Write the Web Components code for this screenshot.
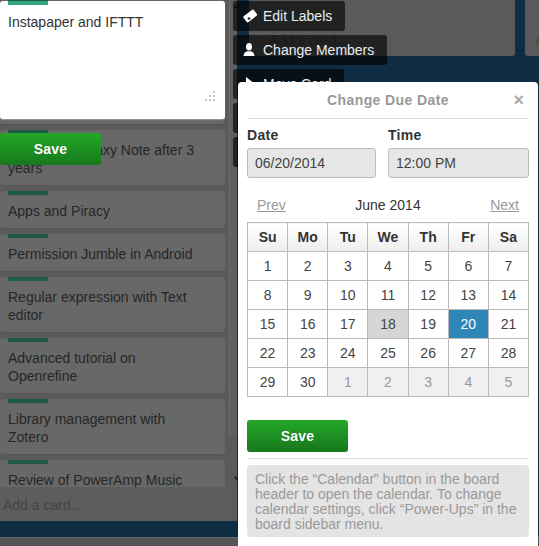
<!DOCTYPE html>
<html>
<head>
<meta charset="utf-8">
<title>Change Due Date</title>
<style>
    html, body { margin: 0; height: 100%; overflow: hidden; background: #0e2c42; }
    body { font: 14px/18px "Liberation Sans", Arial, sans-serif; }
</style>
</head>
<body>
<due-app>
    <board-view>
        <board-list slot="first" footer="Add a card…">
            <list-card style="height:124px"></list-card>
            <list-card>Review of Galaxy Note after 3 years</list-card>
            <list-card>Apps and Piracy</list-card>
            <list-card>Permission Jumble in Android</list-card>
            <list-card>Regular expression with Text editor</list-card>
            <list-card>Advanced tutorial on Openrefine</list-card>
            <list-card>Library management with Zotero</list-card>
            <list-card>Review of PowerAmp Music</list-card>
        </board-list>
    </board-view>
    <quick-editor>Instapaper and IFTTT</quick-editor>
    <quick-actions></quick-actions>
    <due-popover></due-popover>
</due-app>

<script>
class DueApp extends HTMLElement {
    constructor() {
        super();
        this.attachShadow({ mode: 'open' });
    }
    connectedCallback() {
        this.shadowRoot.innerHTML = `
            <style>
                :host { display: block; position: relative; width: 539px; height: 546px; overflow: hidden; }
            </style>
            <slot></slot>
        `;
    }
}
customElements.define('due-app', DueApp);

class BoardView extends HTMLElement {
    constructor() {
        super();
        this.attachShadow({ mode: 'open' });
    }
    connectedCallback() {
        this.shadowRoot.innerHTML = `
            <style>
                :host { display: flex; flex-direction: column; width: 539px; height: 546px; }
                .lists { display: flex; height: 537px; gap: 10px; }
                .wide { width: 266px; height: 56px; margin-left: 2px; background: #5a5a5a; border-radius: 0 0 3px 3px;
                        color: #484848; padding: 31px 0 0 20px; box-sizing: border-box; }
                .last { flex: 1; height: 56px; background: #5a5a5a; border-radius: 0 0 0 3px;
                        color: #484848; padding: 31px 0 0 10px; box-sizing: border-box; overflow: hidden; }
                .strip { height: 9px; background: #555; border-top: 1px solid #6a6a6a; box-sizing: border-box; }
            </style>
            <div class="lists">
                <slot name="first"></slot>
                <div class="wide">Add a card…</div>
                <div class="last">Add</div>
            </div>
            <div class="strip"></div>
        `;
    }
}
customElements.define('board-view', BoardView);

class BoardList extends HTMLElement {
    constructor() {
        super();
        this.attachShadow({ mode: 'open' });
    }
    connectedCallback() {
        this.shadowRoot.innerHTML = `
            <style>
                :host { display: flex; flex-direction: column; position: relative; width: 237px; height: 521px; background: #5a5a5a; }
                .body { display: flex; height: 487px; overflow: hidden; }
                .cards { width: 225px; flex: none; display: flex; flex-direction: column; gap: 6px; }
                .scroll { margin-left: 4px; width: 8px; height: 437px; background: #5f5f5f; border-left: 1px solid #6b6b6b; box-sizing: border-box; }
                .foot { height: 34px; background: #5d5d5d; color: #444; padding: 9px 3px 0; box-sizing: border-box; }
                /* scroll arrows lie over the bar */
                .arrow { position: absolute; left: 234px; fill: none; stroke: #222; stroke-width: 2; }
            </style>
            <div class="body">
                <div class="cards"><slot></slot></div>
                <div class="scroll"></div>
            </div>
            <div class="foot">${this.getAttribute('footer') || ''}</div>
            <svg class="arrow" style="top:3px" width="9" height="6" viewBox="0 0 9 6"><path d="M.7 5.300 4.500 1.500 8.300 5.300"/></svg>
            <svg class="arrow" style="top:476px" width="9" height="6" viewBox="0 0 9 6"><path d="M.7.700 4.500 4.500 8.300.700"/></svg>
        `;
    }
}
customElements.define('board-list', BoardList);

class ListCard extends HTMLElement {
    constructor() {
        super();
        this.attachShadow({ mode: 'open' });
    }
    connectedCallback() {
        this.shadowRoot.innerHTML = `
            <style>
                :host { display: block; flex: none; background: #686868; border-radius: 3px; color: #262626;
                        box-shadow: 0 1px 0 #555; padding: 0 26px 8px 8px; box-sizing: border-box; }
                .label { width: 40px; height: 4px; background: #1f5a45; margin-bottom: 7px; }
            </style>
            <div class="label"></div>
            <slot></slot>
        `;
    }
}
customElements.define('list-card', ListCard);

class QuickEditor extends HTMLElement {
    constructor() {
        super();
        this.attachShadow({ mode: 'open' });
    }
    connectedCallback() {
        this.shadowRoot.innerHTML = `
            <style>
                /* sits over the first card of the list */
                :host { display: block; position: absolute; left: 0; top: 1px; width: 225px; height: 165px; }
                .box { position: relative; height: 118px; background: #fff; border-radius: 3px; color: #333; padding: 0 8px;
                       box-sizing: border-box; box-shadow: 0 1px 1px #999; }
                .label { width: 40px; height: 4px; background: #34a67e; margin-bottom: 8px; }
                svg { position: absolute; right: 9px; bottom: 17px; }
                .save { display: block; width: 101px; height: 32px; margin-top: 14px; line-height: 32px; text-align: center; font-weight: bold;
                        letter-spacing: .2px; color: #fff; background: linear-gradient(#24a828, #17791c); border-radius: 3px; text-shadow: 0 0 1px rgba(0,0,0,.3); }
            </style>
            <div class="box">
                <div class="label"></div>
                <slot></slot>
                <svg width="12" height="12" viewBox="0 0 12 12" fill="#c8c8c8">
                    <rect x="9" y="1" width="2" height="2"/><rect x="5" y="5" width="2" height="2"/><rect x="9" y="5" width="2" height="2"/>
                    <rect x="1" y="9" width="2" height="2"/><rect x="5" y="9" width="2" height="2"/><rect x="9" y="9" width="2" height="2"/>
                </svg>
            </div>
            <div class="save">Save</div>
        `;
    }
}
customElements.define('quick-editor', QuickEditor);

class QuickActions extends HTMLElement {
    constructor() {
        super();
        this.attachShadow({ mode: 'open' });
    }
    connectedCallback() {
        const tag = `<svg width="14" height="14" viewBox="0 0 14 14"><rect x="1" y="3.500" width="13" height="7.500" rx="1.500" fill="#fff" transform="rotate(-38 7 7.500)"/><circle cx="6" cy="9.500" r="1.300" fill="#1b2a33"/></svg>`;
        const person = `<svg width="14" height="14" viewBox="0 0 14 14" fill="#fff"><ellipse cx="6" cy="3.800" rx="3" ry="3.800"/><path d="M.6 13c0-2.600 1.200-4 3.400-4.700h4c2.200.7 3.400 2.100 3.400 4.700z"/></svg>`;
        const move = `<svg width="14" height="14" viewBox="0 0 14 14" fill="#fff"><path d="M3 0l9 7-9 7z"/></svg>`;
        const row = (icon, text, width) => `<div class="act" style="width:${width}px">${icon}<span>${text}</span></div>`;
        this.shadowRoot.innerHTML = `
            <style>
                :host { display: flex; flex-direction: column; gap: 4px; position: absolute; left: 233px; top: 1px; }
                .act { display: flex; align-items: center; gap: 6px; height: 30px; box-sizing: border-box; padding-left: 10px;
                       background: rgba(0,0,0,.62); border-radius: 3px; color: #e6eef2; white-space: nowrap; }
                svg { flex: none; }
            </style>
            ${row(tag, 'Edit Labels', 112)}
            ${row(person, 'Change Members', 154)}
            ${row(move, 'Move Card', 111)}
            ${row('', '', 111)}
            ${row('', '', 111)}
        `;
    }
}
customElements.define('quick-actions', QuickActions);

class DueCalendar extends HTMLElement {
    constructor() {
        super();
        this.attachShadow({ mode: 'open' });
    }
    connectedCallback() {
        const days = ['Su', 'Mo', 'Tu', 'We', 'Th', 'Fr', 'Sa'];
        const cells = [];
        for (let d = 1; d <= 30; d++) cells.push(`<td class="${d === 18 ? 'today' : d === 20 ? 'sel' : ''}">${d}</td>`);
        for (let d = 1; d <= 5; d++) cells.push(`<td class="other">${d}</td>`);
        let rows = '';
        for (let i = 0; i < 35; i += 7) rows += `<tr>${cells.slice(i, i + 7).join('')}</tr>`;
        this.shadowRoot.innerHTML = `
            <style>
                :host { display: block; }
                .nav { display: flex; justify-content: space-between; padding: 0 10px; height: 18px; margin-bottom: 8px; color: #333; }
                .nav a { color: #999; text-decoration: underline; }
                table { border-collapse: collapse; width: 282px; table-layout: fixed; color: #444; }
                th, td { border: 1px solid #bbb; height: 28px; padding: 0; text-align: center; }
                th { font-weight: bold; background: linear-gradient(#fff, #eee); color: #333; }
                .today { background: #d6d6d6; }
                .sel { background: #2e86b9; color: #fff; }
                .other { background: #f0f0f0; color: #999; }
            </style>
            <div class="nav"><a>Prev</a><span>June 2014</span><a>Next</a></div>
            <table>
                <tr>${days.map(d => `<th>${d}</th>`).join('')}</tr>
                ${rows}
            </table>
        `;
    }
}
customElements.define('due-calendar', DueCalendar);

class DuePopover extends HTMLElement {
    constructor() {
        super();
        this.attachShadow({ mode: 'open' });
    }
    connectedCallback() {
        this.shadowRoot.innerHTML = `
            <style>
                :host { display: block; position: absolute; left: 238px; top: 82px; width: 300px; height: 470px; background: #fff;
                        border-radius: 4px; padding: 0 9px; box-sizing: border-box; color: #333; }
                .head { position: relative; height: 36px; line-height: 36px; text-align: center; font-weight: bold; color: #999;
                        letter-spacing: .4px; border-bottom: 1px solid #ddd; }
                .close { position: absolute; right: 5px; top: 0; font-size: 18px; color: #aaa; letter-spacing: 0; }
                .fields { display: grid; grid-template-columns: 129px 141px; gap: 12px; margin-top: 7px; margin-bottom: 18px; }
                label { display: block; font-weight: bold; height: 22px; line-height: 18px; letter-spacing: .3px; }
                .input { height: 30px; line-height: 28px; padding: 0 7px; background: #e6e6e6; border: 1px solid #bbb; border-radius: 3px; box-sizing: border-box; color: #444; }
                .save { width: 101px; height: 32px; line-height: 32px; margin-top: 23px; text-align: center; font-weight: bold; letter-spacing: .2px; color: #fff;
                        background: linear-gradient(#24a828, #17771c); border-radius: 3px; text-shadow: 0 0 1px rgba(0,0,0,.3); }
                hr { border: 0; height: 1px; background: #ddd; margin: 6px 0; }
                .note { height: 72px; background: #e4e4e4; border-radius: 4px; padding: 7px 8px; box-sizing: border-box; color: #999; line-height: 15px; }
            </style>
            <div class="head">Change Due Date<span class="close">×</span></div>
            <div class="fields">
                <div><label>Date</label><div class="input">06/20/2014</div></div>
                <div><label>Time</label><div class="input">12:00 PM</div></div>
            </div>
            <due-calendar></due-calendar>
            <div class="save">Save</div>
            <hr>
            <div class="note">Click the “Calendar” button in the board header to open the calendar. To change calendar settings, click “Power-Ups” in the board sidebar menu.</div>
        `;
    }
}
customElements.define('due-popover', DuePopover);
</script>
</body>
</html>
